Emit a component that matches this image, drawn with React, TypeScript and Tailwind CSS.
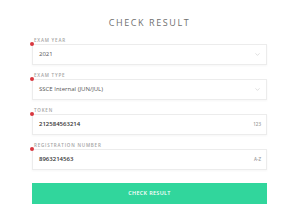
import { ChevronDown } from 'lucide-react';

type Field = {
  label: string;
  value: string;
  kind: 'select' | 'text';
  hint?: string;
  bold?: boolean;
};

const fields: Field[] = [
  { label: 'EXAM YEAR', value: '2021', kind: 'select' },
  { label: 'EXAM TYPE', value: 'SSCE Internal (JUN/JUL)', kind: 'select' },
  { label: 'TOKEN', value: '212584563214', kind: 'text', hint: '123', bold: true },
  { label: 'REGISTRATION NUMBER', value: '8963214563', kind: 'text', hint: 'A-Z', bold: true },
];

function FormField({ field }: { field: Field }) {
  return (
    <div className="relative">
      <div className="h-[8px] pl-[2px] text-[4.5px] leading-[8px] font-semibold tracking-[0.8px] text-[#a3a3a3]">
        {field.label}
      </div>
      <div className="flex h-[21px] items-center justify-between border border-[#ececec] bg-white pl-[6px] pr-[5px] shadow-[0_1px_2px_rgba(0,0,0,0.04)]">
        <span
          className={`text-[6px] ${field.bold ? 'font-semibold text-[#333]' : 'text-[#555]'}`}
        >
          {field.value}
        </span>
        {field.kind === 'select' ? (
          <ChevronDown className="h-[7px] w-[7px] text-[#b5b5b5]" strokeWidth={1.5} />
        ) : (
          <span className="text-[4.5px] font-semibold text-[#9a9a9a]">{field.hint}</span>
        )}
      </div>
      {/* required marker */}
      <span className="absolute left-[-2px] top-[6px] h-[4px] w-[4px] rounded-full bg-[#d9373f]" />
    </div>
  );
}

export default function App() {
  return (
    <div className="h-[206px] w-[300px] bg-white font-['Open_Sans',sans-serif]">
      <div className="ml-[32px] w-[235px] pt-[16px]">
        <h1 className="h-[14px] text-center text-[9px] leading-[14px] tracking-[1.6px] text-[#707070]">
          CHECK RESULT
        </h1>
        <div className="mt-[6px] flex flex-col gap-[6px]">
          {fields.map((f) => (
            <FormField key={f.label} field={f} />
          ))}
        </div>
        <button className="mt-[13px] flex h-[21px] w-full items-center justify-center bg-[#31d69c] text-[5.5px] font-semibold tracking-[0.3px] text-white">
          CHECK RESULT
        </button>
      </div>
    </div>
  );
}
